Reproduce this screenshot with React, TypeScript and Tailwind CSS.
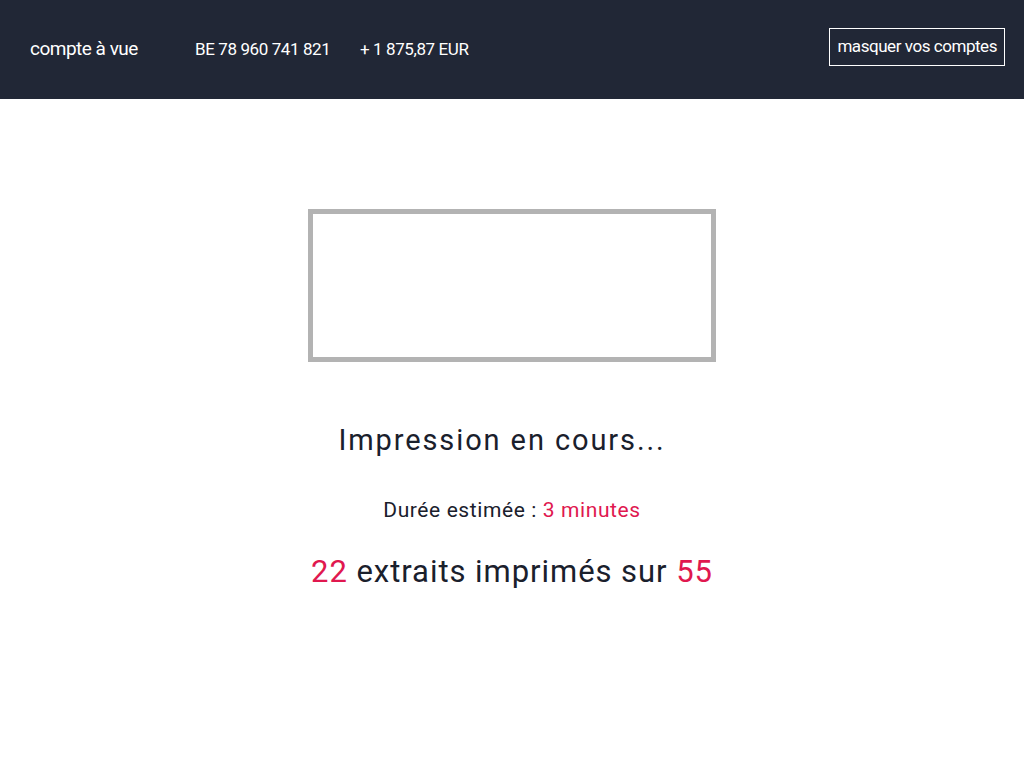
import React from 'react';

const App: React.FC = () => {
  return (
    <div className="min-h-[768px] bg-white font-['Roboto',sans-serif]">
      <header className="bg-[#212736] text-white h-[99px] flex items-center justify-between pl-[30px] pr-[19px]">
        <div className="flex items-center tracking-[-0.4px]">
          <span className="w-[165px] text-[19px] tracking-[-0.5px]">compte à vue</span>
          <span className="w-[165px] text-[17px]">BE 78 960 741 821</span>
          <span className="text-[17px]">+ 1 875,87 EUR</span>
        </div>
        <button className="border border-white px-[7px] h-[38px] mb-[5px] text-[17px] tracking-[-0.45px] text-white">
          masquer vos comptes
        </button>
      </header>

      <main className="flex flex-col items-center pt-[110px]">
        <div className="w-[408px] h-[153px] border-[5px] border-[#b3b3b3]" />
        <h1 className="mt-[58px] mr-[20px] text-[29px] tracking-[1.9px] text-[#1a202c] leading-[40px]">
          Impression en cours...
        </h1>
        <p className="mt-[36px] text-[21px] tracking-[0.6px] text-[#1a202c] leading-[28px]">
          Durée estimée : <span className="text-[#e0184f]">3 minutes</span>
        </p>
        <p className="mt-[28px] text-[31px] tracking-[0.95px] text-[#1a202c] leading-[40px]">
          <span className="text-[#e0184f]">22</span> extraits imprimés sur{' '}
          <span className="text-[#e0184f]">55</span>
        </p>
      </main>
    </div>
  );
};

export default App;
